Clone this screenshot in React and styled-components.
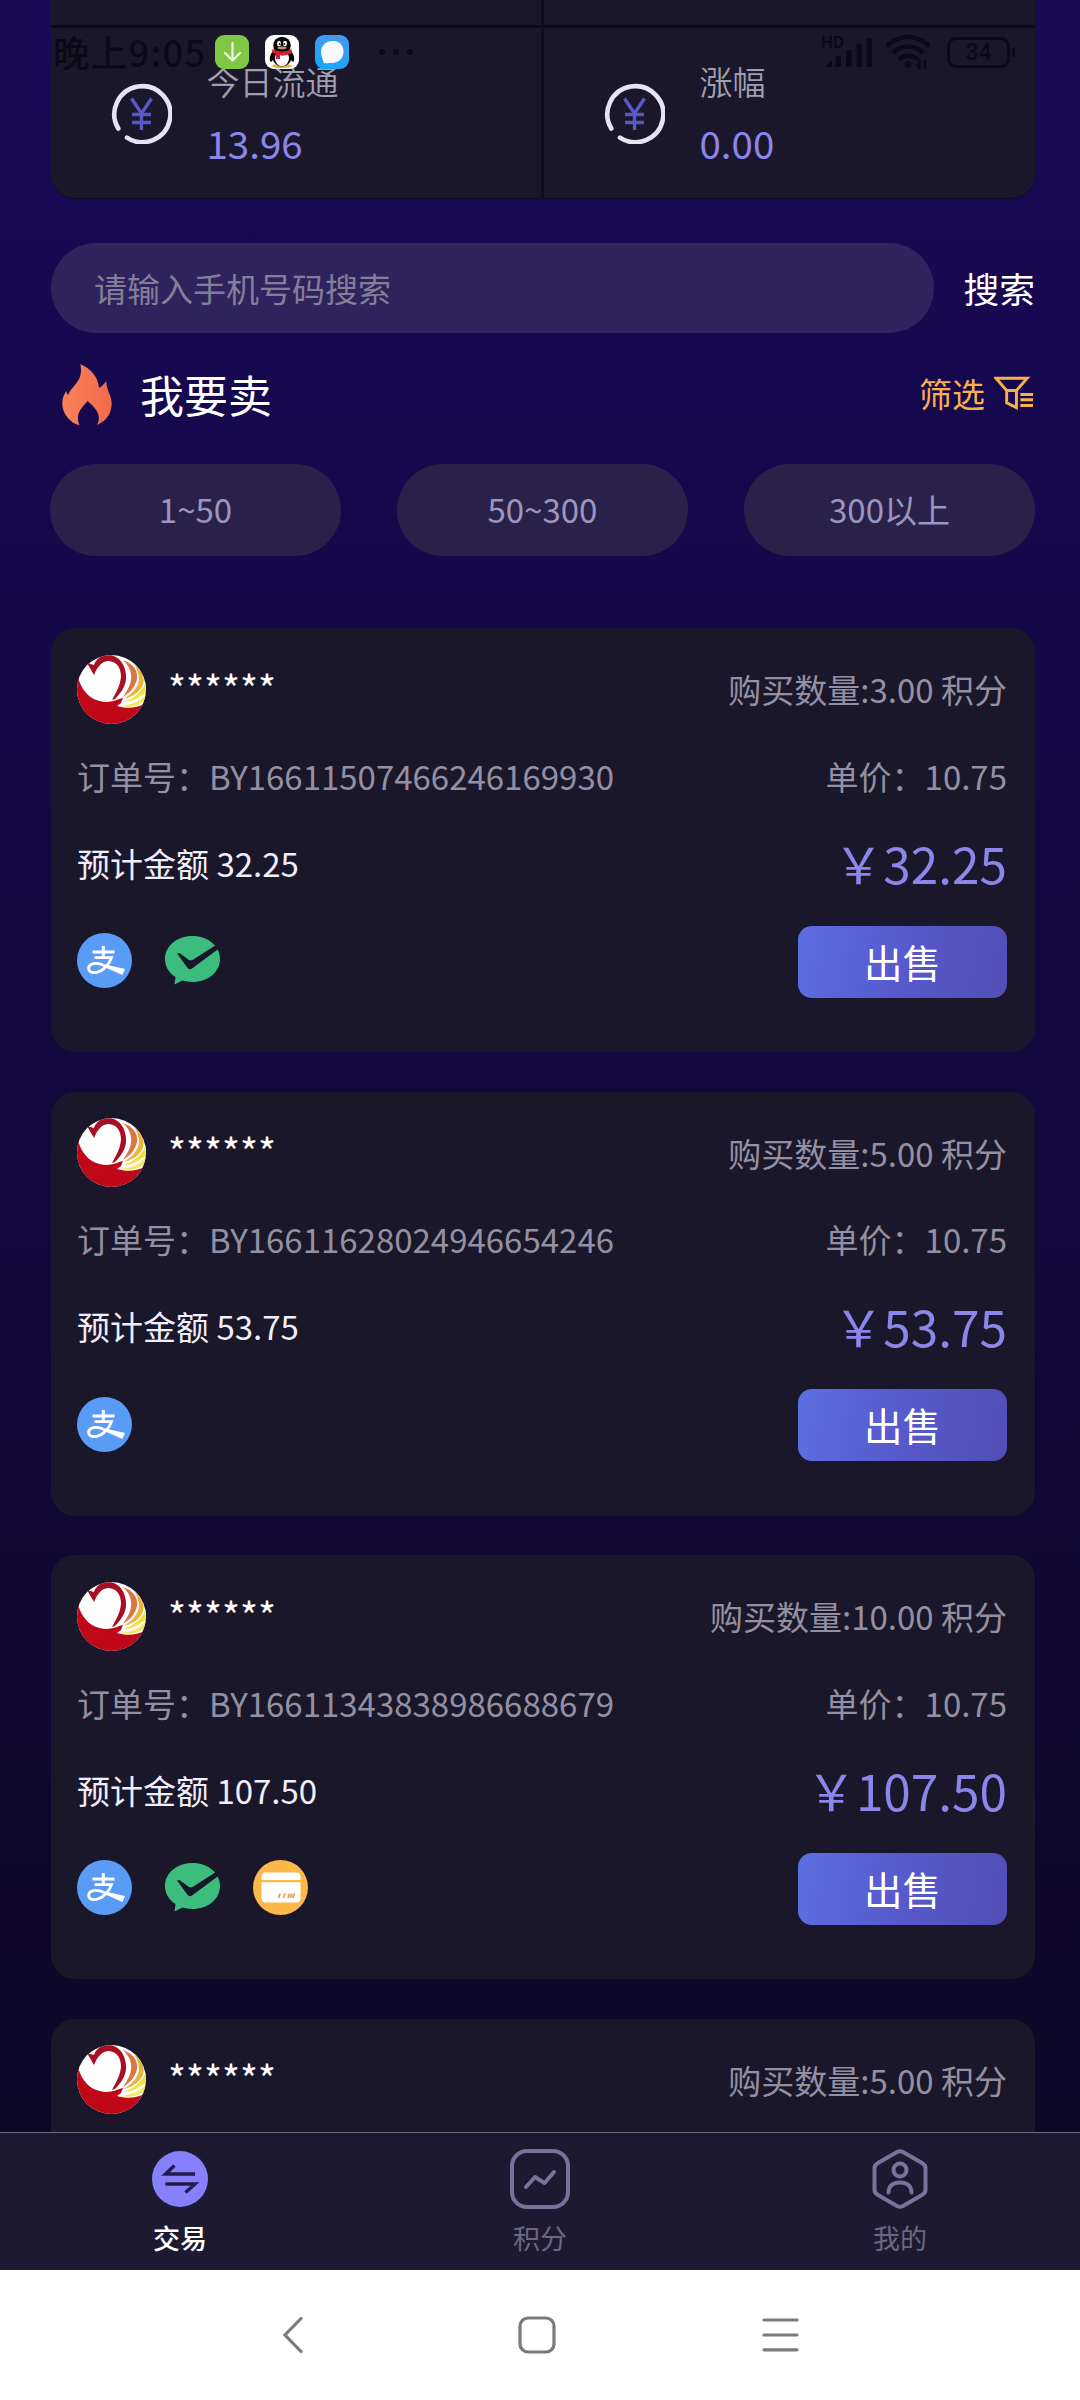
import React from 'react'
import styled, { createGlobalStyle } from 'styled-components'

const GlobalStyle = createGlobalStyle`
  * {
    box-sizing: border-box;
  }
  body {
    margin: 0;
    background: #0d0726;
    font-family: 'Noto Sans CJK SC', 'Noto Sans', sans-serif;
    color: #fff;
  }
  svg {
    display: block;
    flex: none;
  }
`

const Screen = styled.div`
  position: relative;
  width: 1080px;
  height: 2400px;
  display: flex;
  flex-direction: column;
  overflow: hidden;
`

const Content = styled.main`
  height: 2132px;
  padding: 0 45px 0 51px;
  overflow: hidden;
  background: linear-gradient(#190a56 0, #16084c 500px, #130840 1000px, #0d0726 2132px);
`

/* status bar */

const StatusBar = styled.div`
  position: absolute;
  top: 31px;
  left: 53px;
  right: 65px;
  height: 42px;
  display: flex;
  align-items: center;
  color: #0b0917;
`

const Clock = styled.span`
  width: 162px;
  font-size: 36.5px;
  font-weight: 500;
  line-height: 42px;
  letter-spacing: 1.2px;
  white-space: nowrap;
`

const AppIcon = styled.span`
  width: 34px;
  height: 34px;
  margin-right: 16px;
  border-radius: 9px;
  overflow: hidden;
  background: ${props => props.bg};
`

const Dots = styled.span`
  display: flex;
  gap: 8px;
  margin-left: 14px;
  i {
    width: 6px;
    height: 6px;
    border-radius: 50%;
    background: #0b0917;
  }
`

const StatusRight = styled.div`
  margin-left: auto;
  display: flex;
  align-items: center;
`

const Network = styled.div`
  position: relative;
  width: 51px;
  height: 34px;
  margin-right: 12px;
`

const Hd = styled.span`
  position: absolute;
  left: -1px;
  top: -1px;
  font: 700 17px/16px Roboto, sans-serif;
`

const Battery = styled.div`
  position: relative;
  width: 63px;
  height: 31px;
  margin: 0 5px 0 16px;
  border: 3px solid #0b0917;
  border-radius: 9px;
  font: 500 23px/26px Roboto, sans-serif;
  text-align: center;
  &::after {
    content: '';
    position: absolute;
    right: -8px;
    top: 8px;
    width: 3px;
    height: 9px;
    background: #0b0917;
  }
`

/* stats */

const Stats = styled.section`
  height: 199px;
  display: grid;
  grid-template-columns: 490px 1fr;
  grid-template-rows: 25px 1fr;
  gap: 3px;
  border-radius: 0 0 24px 24px;
  border-bottom: 1px solid #110c26;
  overflow: hidden;
  background: #0f0b1e;
`

const Stat = styled.div`
  display: flex;
  padding: 22.5px 0 0 60px;
  background: #1b172a;
`

const StatText = styled.div`
  margin-left: 34.5px;
`

const StatLabel = styled.div`
  font-size: 33px;
  line-height: 61px;
  font-weight: 350;
  color: #a19eaf;
`

const StatValue = styled.div`
  font-size: 38.5px;
  line-height: 60px;
  color: #8c85ea;
`

const CoinIcon = styled.svg`
  margin-top: 32px;
`

/* search and filter */

const SearchRow = styled.div`
  display: flex;
  align-items: center;
  justify-content: space-between;
  margin-top: 44px;
`

const SearchBox = styled.div`
  width: 883px;
  height: 90px;
  padding-left: 43px;
  border-radius: 45px;
  background: #2f235d;
  font-size: 33px;
  line-height: 90px;
  color: #847e98;
`

const SearchButton = styled.span`
  font-size: 35.75px;
  line-height: 86px;
`

const TitleRow = styled.div`
  display: flex;
  align-items: center;
  height: 123px;
`

const Title = styled.h2`
  margin: 0 auto 2px 28px;
  font-size: 44px;
  font-weight: 400;
`

const Filter = styled.div`
  display: flex;
  align-items: center;
  gap: 9px;
  margin: 0 1px 3px 0;
  font-size: 33px;
  color: #f7b04b;
`

const Ranges = styled.div`
  display: flex;
  justify-content: space-between;
  margin: 8px 0 72px -1px;
`

const Range = styled.div`
  width: 291px;
  height: 92px;
  border-radius: 46px;
  background: #2a214b;
  font-size: 33px;
  line-height: 90px;
  text-align: center;
  color: #9c95bd;
`

/* orders */

const Card = styled.article`
  height: 424px;
  margin-bottom: 39.5px;
  padding: 26.5px 28px 0 26px;
  border-radius: 24px;
  background: #1b172a;
`

const Row = styled.div`
  display: flex;
  align-items: center;
  justify-content: space-between;
  height: ${props => props.h || 60}px;
  margin-top: ${props => props.mt || 0}px;
`

const User = styled.div`
  display: flex;
  align-items: center;
  gap: 22px;
`

const UserName = styled.span`
  margin-bottom: 5px;
  font-size: 38.5px;
  line-height: 60px;
`

const Muted = styled.span`
  font-size: 33px;
  color: #9490a3;
`

const Estimate = styled.span`
  font-size: 33px;
  color: #f0eefa;
`

const Price = styled.span`
  font-size: 49.5px;
  line-height: 60px;
  color: #8c85ea;
`

const Payments = styled.div`
  display: flex;
  align-items: center;
  gap: 33px;
  margin-bottom: 2px;
`

const SellButton = styled.button`
  width: 209px;
  height: 72px;
  padding: 0 0 2px;
  border: 0;
  border-radius: 14px;
  background: linear-gradient(100deg, #5d6fe2, #5759cc 50%, #514fb6);
  color: #fff;
  font-family: inherit;
  font-size: 38.5px;
  line-height: 70px;
`

/* bottom bars */

const TabBar = styled.nav`
  display: flex;
  height: 138px;
  border-top: 1px solid #6e6b7c;
  background: #1d1930;
`

const Tab = styled.div`
  flex: 1;
  display: flex;
  flex-direction: column;
  align-items: center;
  padding-top: 16px;
  font-size: 27px;
  line-height: 57px;
  font-weight: ${props => (props.active ? 500 : 400)};
  color: ${props => (props.active ? '#fff' : '#6c6881')};
`

const SystemNav = styled.div`
  flex: 1;
  display: flex;
  align-items: center;
  padding-left: 283px;
  background: #fff;
  svg:nth-child(2) {
    margin: 0 206px 0 215px;
  }
`

const Coin = () => (
  <CoinIcon width="61" height="61" viewBox="0 0 61 61" fill="none" strokeLinecap="round">
    <path d="M7.3 45.5A28 28 0 1 1 16 54.6" stroke="#e6e3f2" strokeWidth="4.6" />
    <path d="M20.5 15.5L30.5 30.5L40.5 15.5M30.5 30V47M21 31.5H40M21 39.5H40" stroke="#5c57c6" strokeWidth="3.4" strokeLinecap="butt" />
  </CoinIcon>
)

const Penguin = () => (
  <svg width="34" height="34" viewBox="0 0 34 34">
    <ellipse cx="17" cy="31" rx="10" ry="2" fill="#eeb13c" />
    <path d="M9 15C4 20 4 26 6 27L10 23L24 23L28 27C30 26 30 20 25 15Z" fill="#070709" />
    <ellipse cx="17" cy="22" rx="9.5" ry="9.5" fill="#070709" />
    <ellipse cx="17" cy="23.5" rx="7" ry="7.8" fill="#fff" />
    <ellipse cx="17" cy="10.5" rx="8.8" ry="8.8" fill="#070709" />
    <path d="M7.5 14Q17 19 26.5 14L27 18Q17 22 15 20V24H11V19L7 17.5Z" fill="#d3222b" />
    <ellipse cx="14" cy="8.5" rx="2" ry="2.7" fill="#fff" />
    <ellipse cx="20" cy="8.5" rx="2" ry="2.7" fill="#fff" />
    <circle cx="14.6" cy="9" r="0.9" />
    <circle cx="19.4" cy="9" r="0.9" />
    <ellipse cx="17" cy="13" rx="4.5" ry="1.4" fill="#c98a68" />
  </svg>
)

const Avatar = () => (
  <svg width="69" height="69" viewBox="0 0 69 69">
    <defs>
      <clipPath id="round">
        <circle cx="34.5" cy="34.5" r="34.5" />
      </clipPath>
    </defs>
    <g clipPath="url(#round)">
      <rect width="69" height="69" fill="#fff" />
      <path d="M46 5C57 9 61 16 60 24C58 33 52 38 46 42C52 33 55 27 54 19C53 13 50 9 46 5Z" fill="#dc7443" />
      <path d="M57 9C65 14 68 22 66 30C62 38 55 42 47 44C56 38 61 32 62 25C62 19 60 13 57 9Z" fill="#e6b53f" />
      <path d="M69 27L69 37C61 44 54 47 46 47C56 44 64 38 69 27Z" fill="#f1e246" />
      <path d="M69 39C63 47 54 50 43 51C55 53 62 51 68 45Z" fill="#f3e85a" />
      <path d="M0 18C4 37 14 46 29 47C36 47 41 44 46 43L44 48L40 51C50 54 59 53 68 49L60 69H0Z" fill="#be0717" />
      <path d="M10 8L17 20C21 10 26 6 32 6C41 7 44 14 44 22C43 32 38 39 35 45L38 44C45 37 50 29 49 20C48 8 41 0 31 0C24 0 19 4 17 10Z" fill="#a80f22" />
      <path d="M60 58L68 52" stroke="#f2c7cc" strokeWidth="1" />
    </g>
  </svg>
)

const FireIcon = styled.svg`
  margin-left: 11px;
`

const Fire = () => (
  <FireIcon width="50" height="62" viewBox="66 40 150 184">
    <defs>
      <linearGradient id="fire">
        <stop offset="0" stopColor="#fb8258" />
        <stop offset="1" stopColor="#f06a4c" />
      </linearGradient>
    </defs>
    <path
      d="M121 40C152 52 174 78 177 110C188 106 192 98 199 90C198 118 216 132 215 160C213 192 198 210 171 222C188 190 164 170 143 150C123 172 104 192 119 223C88 216 64 184 67 152C68 138 74 128 79 120C80 126 81 129 85 132C93 104 132 94 121 40Z"
      fill="url(#fire)"
    />
  </FireIcon>
)

const FilterIcon = () => (
  <svg width="40" height="34" viewBox="0 0 41 34" fill="none" stroke="#f7b04b" strokeWidth="3">
    <path d="M2 1.8H34L23 14.5V32L13 27V14.5ZM13 14.5H23" />
    <path d="M27 18.5H40M27 24H40M27 29.8H40" />
  </svg>
)

const Alipay = () => (
  <svg width="55" height="55" viewBox="0 0 55 55" fill="none" stroke="#fff">
    <circle cx="27.5" cy="27.5" r="27.5" fill="#5a9cf5" stroke="none" />
    <path d="M15.5 19H37.5M26.3 13V24.5" strokeWidth="3" />
    <path d="M17.5 24.6H34.5C32 32 26 38 19.5 39.5C13.5 40.5 10.5 37.5 12 33.5C14 30 20 29 27 32.5" strokeWidth="2.8" />
    <path d="M24 30.5L48 36L45.5 42L24 32.5Z" fill="#fff" stroke="none" />
  </svg>
)

const WechatPay = () => (
  <svg width="55" height="49" viewBox="0 0 55 49">
    <path
      d="M27.5 0C43 0 55 10 55 23C55 36 43 46 27.5 46C24 46 20 45 17.5 44.5L9.5 48.5L10.5 41C4 37 0 30.5 0 23C0 10 12 0 27.5 0Z"
      fill="#3dbd7d"
    />
    <path d="M12 17.5L14.5 17L24 24Q25.5 24.8 27.5 24L51 9L54 12.5L27 32.5Q25 34 23 32.5Z" fill="#16152a" />
  </svg>
)

const BankCard = () => (
  <svg width="55" height="55" viewBox="0 0 55 55">
    <circle cx="27.5" cy="27.5" r="27.5" fill="#fbb94b" />
    <path d="M8.5 20V17Q8.5 12.5 13 12.5H43Q47.5 12.5 47.5 17V20ZM8.5 22.3H47.5V38Q47.5 42.5 43 42.5H13Q8.5 42.5 8.5 38Z" fill="#fff" />
    <path d="M27 33.5L25.5 38M32 33.5L30.5 38M36.5 33.5L35 38M39 33.5L37.5 38M41.500 33.500L40 38" stroke="#e3a869" strokeWidth="2" />
  </svg>
)

const payIcons = { alipay: Alipay, wechat: WechatPay, card: BankCard }

const orders = [
  { id: 'BY16611507466246169930', amount: '3.00', price: '10.75', total: '32.25', pays: ['alipay', 'wechat'] },
  { id: 'BY16611628024946654246', amount: '5.00', price: '10.75', total: '53.75', pays: ['alipay'] },
  { id: 'BY16611343838986688679', amount: '10.00', price: '10.75', total: '107.50', pays: ['alipay', 'wechat', 'card'] }
]

const OrderHead = ({ amount }) => (
  <Row h={69}>
    <User>
      <Avatar />
      <UserName>******</UserName>
    </User>
    <Muted>购买数量:{amount} 积分</Muted>
  </Row>
)

const Order = ({ order }) => (
  <Card>
    <OrderHead amount={order.amount} />
    <Row mt={22}>
      <Muted>订单号：{order.id}</Muted>
      <Muted>单价：{order.price}</Muted>
    </Row>
    <Row mt={27}>
      <Estimate>预计金额 {order.total}</Estimate>
      <Price>￥{order.total}</Price>
    </Row>
    <Row h={72} mt={33}>
      <Payments>
        {order.pays.map(name => {
          const Icon = payIcons[name]
          return <Icon key={name} />
        })}
      </Payments>
      <SellButton>出售</SellButton>
    </Row>
  </Card>
)

const App = () => (
  <Screen>
    <GlobalStyle />
    <Content>
      <Stats>
        <Stat />
        <Stat />
        <Stat>
          <Coin />
          <StatText>
            <StatLabel>今日流通</StatLabel>
            <StatValue>13.96</StatValue>
          </StatText>
        </Stat>
        <Stat>
          <Coin />
          <StatText>
            <StatLabel>涨幅</StatLabel>
            <StatValue>0.00</StatValue>
          </StatText>
        </Stat>
      </Stats>

      <SearchRow>
        <SearchBox>请输入手机号码搜索</SearchBox>
        <SearchButton>搜索</SearchButton>
      </SearchRow>

      <TitleRow>
        <Fire />
        <Title>我要卖</Title>
        <Filter>
          筛选
          <FilterIcon />
        </Filter>
      </TitleRow>

      <Ranges>
        <Range>1~50</Range>
        <Range>50~300</Range>
        <Range>300以上</Range>
      </Ranges>

      {orders.map(order => (
        <Order key={order.id} order={order} />
      ))}
      <Card>
        <OrderHead amount="5.00" />
      </Card>
    </Content>

    <TabBar>
      <Tab active>
        <svg width="60" height="60" viewBox="0 0 60 60" fill="none">
          <circle cx="30" cy="30" r="28" fill="#8680fb" />
          <path d="M24.5 16.5L15.5 25H45M15.5 35H45L35.5 43.5" stroke="#231c4a" strokeWidth="3.4" />
        </svg>
        交易
      </Tab>
      <Tab>
        <svg width="60" height="60" viewBox="0 0 60 60" fill="none" stroke="#77749a" strokeWidth="4">
          <rect x="2" y="2" width="56" height="56" rx="15" />
          <path d="M16 38L25 28L34.5 34L44 23" strokeLinecap="round" strokeLinejoin="round" />
        </svg>
        积分
      </Tab>
      <Tab>
        <svg width="60" height="60" viewBox="0 0 60 60" fill="none" stroke="#77749a" strokeWidth="4">
          <path d="M27 3Q30 1.500 33 3L52 14Q55.500 16 55.500 19V41Q55.500 44 52 46L33 57Q30 58.500 27 57L8 46Q4.500 44 4.500 41V19Q4.500 16 8 14Z" />
          <circle cx="30" cy="21" r="6.5" />
          <path d="M18.5 43.5C18.5 37 23 33.5 30 33.5S41.5 37 41.5 43.5" strokeLinecap="round" />
        </svg>
        我的
      </Tab>
    </TabBar>

    <SystemNav>
      <svg width="20" height="38" viewBox="0 0 20 38" fill="none" stroke="#7b7b7b" strokeWidth="3.2" strokeLinecap="round">
        <path d="M18 2.5L2 19L18 35.5" />
      </svg>
      <svg width="38" height="38" viewBox="0 0 38 38" fill="none" stroke="#7b7b7b" strokeWidth="3.2">
        <rect x="2" y="2" width="34" height="34" rx="8" />
      </svg>
      <svg width="37" height="38" viewBox="0 0 37 38" stroke="#7b7b7b" strokeWidth="3.2" strokeLinecap="round">
        <path d="M2 4H35M2 19H35M2 33.8H35" />
      </svg>
    </SystemNav>

    <StatusBar>
      <Clock>晚上9:05</Clock>
      <AppIcon bg="#7fc744">
        <svg width="34" height="34" viewBox="0 0 34 34" fill="none" stroke="#f3fbe6" strokeWidth="2.2" strokeLinecap="round">
          <path d="M17.5 8V25M10 18L17.5 25.5L25 18" />
        </svg>
      </AppIcon>
      <AppIcon bg="#fff">
        <Penguin />
      </AppIcon>
      <AppIcon bg="linear-gradient(20deg, #0fa9f5, #4d97ee)">
        <svg width="34" height="34" viewBox="0 0 34 34">
          <path d="M17.5 6C24 5.5 28.5 10 28.5 16.5C28.5 23 24 28 17 28C14 28 12.5 28.5 8.5 28C9 26 6 22 6 17C6 10.5 11 6 17.5 6Z" fill="#f4faff" />
        </svg>
      </AppIcon>
      <Dots>
        <i />
        <i />
        <i />
      </Dots>
      <StatusRight>
        <Network>
          <Hd>HD</Hd>
          <svg width="51" height="34" viewBox="0 0 51 34" fill="#0b0917">
            <path d="M3 32L10 25V32ZM13.5 21H19V32H13.5ZM24 15H29.5V32H24ZM34.5 9H40V32H34.5ZM44.5 3H50V32H44.5Z" />
          </svg>
        </Network>
        <svg width="46" height="36" viewBox="0 0 46 36" fill="none" stroke="#0b0917" strokeWidth="4.5">
          <path d="M1.5 12Q23-6 44.5 12M7.5 19Q23 6 38.5 19M13.5 25.5Q23 18 32.5 25.5" />
          <circle cx="23" cy="30.5" r="3.5" fill="#0b0917" stroke="none" />
          <path d="M34.5 25V34L31 30M40 35V26" strokeWidth="2.5" />
        </svg>
        <Battery>34</Battery>
      </StatusRight>
    </StatusBar>
  </Screen>
)

export default App
